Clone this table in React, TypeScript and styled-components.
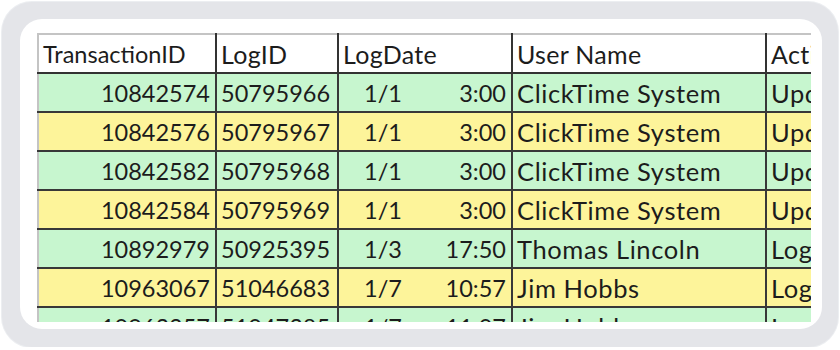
import React from "react";
import styled, { createGlobalStyle } from "styled-components";

interface LogRow {
  transactionId: string;
  logId: string;
  date: string;
  time: string;
  user: string;
  activity: string;
}

const rows: LogRow[] = [
  { transactionId: "10842574", logId: "50795966", date: "1/1", time: "3:00", user: "ClickTime System", activity: "Update" },
  { transactionId: "10842576", logId: "50795967", date: "1/1", time: "3:00", user: "ClickTime System", activity: "Update" },
  { transactionId: "10842582", logId: "50795968", date: "1/1", time: "3:00", user: "ClickTime System", activity: "Update" },
  { transactionId: "10842584", logId: "50795969", date: "1/1", time: "3:00", user: "ClickTime System", activity: "Update" },
  { transactionId: "10892979", logId: "50925395", date: "1/3", time: "17:50", user: "Thomas Lincoln", activity: "Login" },
  { transactionId: "10963067", logId: "51046683", date: "1/7", time: "10:57", user: "Jim Hobbs", activity: "Login" },
  { transactionId: "10963257", logId: "51047385", date: "1/7", time: "11:07", user: "Jim Hobbs", activity: "Login" },
];

const App: React.FC = () => {
  return (
    <>
      <GlobalStyle />
      <Frame>
        <Card>
          <Viewport>
            <Sheet>
              <colgroup>
                <col style={{ width: 178 }} />
                <col style={{ width: 122 }} />
                <col style={{ width: 174 }} />
                <col style={{ width: 254 }} />
                <col style={{ width: 200 }} />
              </colgroup>
              <thead>
                <tr>
                  <HeadCell>TransactionID</HeadCell>
                  <HeadCell $wide>LogID</HeadCell>
                  <HeadCell $wide>LogDate</HeadCell>
                  <HeadCell $wide>User Name</HeadCell>
                  <HeadCell $wide>Activity</HeadCell>
                </tr>
              </thead>
              <tbody>
                {rows.map((row, i) => (
                  <Row key={row.logId} $tone={i % 2 === 0 ? "green" : "yellow"}>
                    <Cell $align="right">{row.transactionId}</Cell>
                    <Cell>{row.logId}</Cell>
                    <Cell>
                      <DateTime>
                        <span>{row.date}</span>
                        <span>{row.time}</span>
                      </DateTime>
                    </Cell>
                    <Cell $wide>{row.user}</Cell>
                    <Cell $wide>{row.activity}</Cell>
                  </Row>
                ))}
              </tbody>
            </Sheet>
          </Viewport>
        </Card>
      </Frame>
    </>
  );
};

const GlobalStyle = createGlobalStyle`
  html, body {
    margin: 0;
    padding: 0;
    background: #ffffff;
  }
  body {
    font-family: Lato, "Liberation Sans", sans-serif;
  }
`;

const Frame = styled.div`
  box-sizing: border-box;
  margin: 2px 2px 0 2px;
  width: 836px;
  height: 345px;
  padding: 17px 16px 18px 18px;
  background: #e4e5e9;
  border-radius: 30px;
  box-shadow: 0 0 0 1px #eceef1;
`;

const Card = styled.div`
  box-sizing: border-box;
  height: 100%;
  padding: 14px 11px 7px 17px;
  background: #ffffff;
  border-radius: 22px;
`;

const Viewport = styled.div`
  height: 100%;
  overflow: hidden;
`;

const Sheet = styled.table`
  border-collapse: collapse;
  table-layout: fixed;
  width: 928px;
  border-top: 2px solid #c4c4c4;
  border-left: 2px solid #c4c4c4;
  font-size: 23.5px;
  color: #1c1c1c;
`;

const HeadCell = styled.th<{ $wide?: boolean }>`
  height: 37px;
  padding: 0 4px;
  text-align: left;
  font-weight: 400;
  font-size: ${(p) => (p.$wide ? "25px" : "23.5px")};
  letter-spacing: ${(p) => (p.$wide ? "0.3px" : "0")};
  white-space: nowrap;
  overflow: hidden;
  background: #ffffff;
  border-right: 2px solid #333333;
  border-bottom: 2px solid #333333;
`;

const Row = styled.tr<{ $tone: "green" | "yellow" }>`
  background: ${(p) => (p.$tone === "green" ? "#c7f6cf" : "#fdf49a")};
`;

const Cell = styled.td<{ $align?: "left" | "right"; $wide?: boolean }>`
  height: 37px;
  padding: 0 ${(p) => (p.$align === "right" ? "5px" : "4px")} 0 4px;
  text-align: ${(p) => p.$align ?? "left"};
  font-size: ${(p) => (p.$wide ? "25.5px" : "23.5px")};
  letter-spacing: ${(p) => (p.$wide ? "0.6px" : "0")};
  white-space: nowrap;
  overflow: hidden;
  border-right: 2px solid #383838;
  border-bottom: 2px solid #383838;
`;

const DateTime = styled.div`
  display: flex;
  justify-content: space-between;
  padding-left: 21px;
  padding-right: 1px;
`;

export default App;
